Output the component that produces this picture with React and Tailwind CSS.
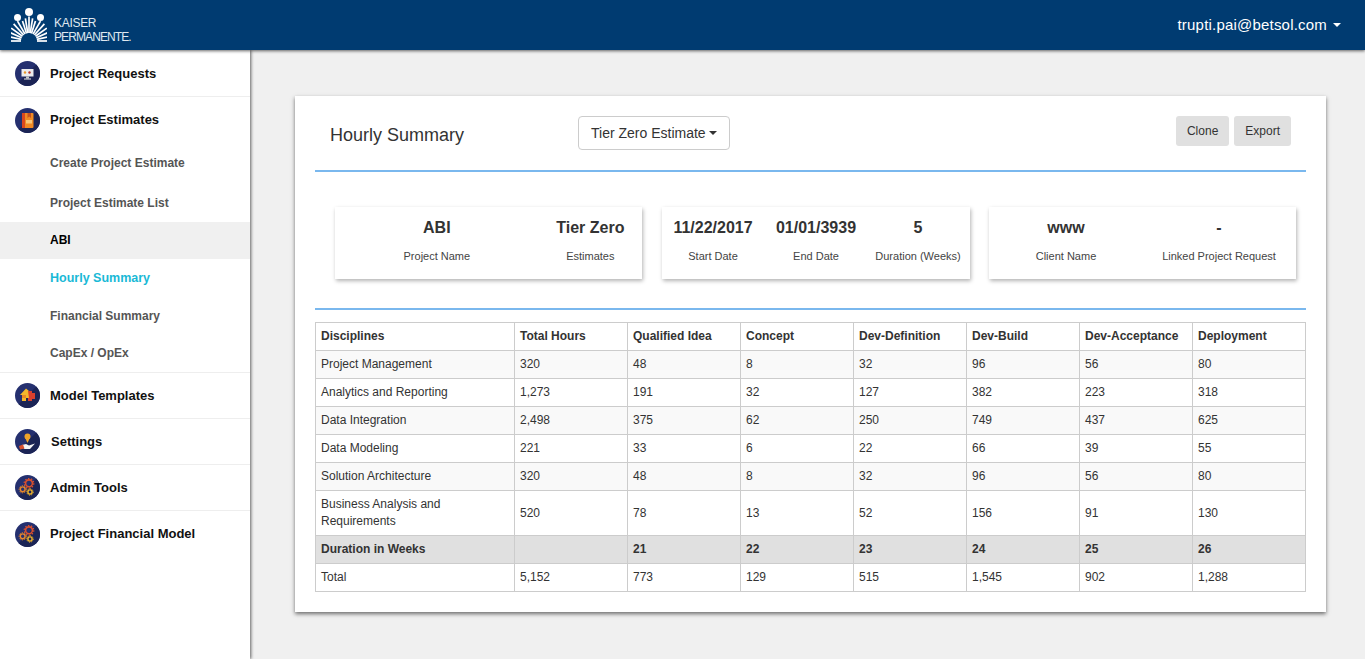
import React from "react";

const font = { fontFamily: '"Liberation Sans", Arial, sans-serif' };

const disciplines = [
  ["Project Management", "320", "48", "8", "32", "96", "56", "80"],
  ["Analytics and Reporting", "1,273", "191", "32", "127", "382", "223", "318"],
  ["Data Integration", "2,498", "375", "62", "250", "749", "437", "625"],
  ["Data Modeling", "221", "33", "6", "22", "66", "39", "55"],
  ["Solution Architecture", "320", "48", "8", "32", "96", "56", "80"],
  ["Business Analysis and Requirements", "520", "78", "13", "52", "156", "91", "130"],
];

const headers = ["Disciplines", "Total Hours", "Qualified Idea", "Concept", "Dev-Definition", "Dev-Build", "Dev-Acceptance", "Deployment"];
const weeks = ["Duration in Weeks", "", "21", "22", "23", "24", "25", "26"];
const total = ["Total", "5,152", "773", "129", "515", "1,545", "902", "1,288"];

// [angle, outer radius] of the rays in the logo
const rays = [
  [180, 18], [168, 19], [156, 20.5], [144, 22], [132, 23], [120, 23], [108, 21],
  [99, 23], [90, 24.5], [81, 23], [72, 21], [60, 23], [48, 23], [36, 22], [24, 20.5], [12, 19], [0, 18],
];

const Logo = () => (
  <svg width="36" height="34" viewBox="0 0 36 34">
    <circle cx="18" cy="4" r="4" fill="#fff" />
    <circle cx="6.5" cy="9.5" r="3.5" fill="#fff" />
    <circle cx="29.5" cy="9.5" r="3.5" fill="#fff" />
    <g stroke="#fff" strokeWidth="1.7">
      {rays.map(([a, r]) => {
        const c = Math.cos((a * Math.PI) / 180);
        const s = Math.sin((a * Math.PI) / 180);
        return <line key={a} x1={18 + 8 * c} y1={33 - 8 * s} x2={18 + r * c} y2={33 - r * s} />;
      })}
    </g>
  </svg>
);

const Badge = ({ children }) => (
  <svg width="25" height="25" viewBox="0 0 25 25" className="shrink-0">
    <circle cx="12.5" cy="12.5" r="12.5" fill="#25306f" />
    <path d="M21.3 3.6 A12.5 12.5 0 0 1 3.6 21.3 Z" fill="#1b2455" />
    {children}
  </svg>
);

const Gears = () => (
  <Badge>
    <circle cx="14" cy="8.3" r="3.4" fill="none" stroke="#d9502e" strokeWidth="1.6" />
    <circle cx="14" cy="8.3" r="4.8" fill="none" stroke="#d9502e" strokeWidth="1.2" strokeDasharray="1.5 1.5" />
    <circle cx="7.7" cy="14.3" r="2.4" fill="none" stroke="#e8872a" strokeWidth="1.4" />
    <circle cx="7.7" cy="14.3" r="3.6" fill="none" stroke="#e8872a" strokeWidth="1" strokeDasharray="1.3 1.3" />
    <circle cx="15" cy="17" r="2.1" fill="none" stroke="#f0b429" strokeWidth="1.4" />
    <circle cx="15" cy="17" r="3.2" fill="none" stroke="#f0b429" strokeWidth="1" strokeDasharray="1.2 1.2" />
  </Badge>
);

const SideRow = ({ icon, label, border = true, h = "h-[46px]", labelClass = "" }) => (
  <div className={`flex items-center gap-[10px] pl-[15px] ${h} ${border ? "border-b border-[#eeeeee]" : ""}`}>
    {icon}
    <span className={`text-[13px] font-bold text-[#111111] ${labelClass}`}>{label}</span>
  </div>
);

const SubRow = ({ label, h = "h-[38px]", className = "text-[12px] text-[#555555]" }) => (
  <div className={`flex items-center pl-[50px] font-bold ${h} ${className}`}>{label}</div>
);

const Stat = ({ value, label, className = "" }) => (
  <div className={`flex flex-col items-center ${className}`}>
    <div className="text-base leading-[22px] font-bold text-[#333333]">{value}</div>
    <div className="mt-[9px] text-[11px] leading-4 whitespace-nowrap text-[#444444]">{label}</div>
  </div>
);

const StatCard = ({ children, className = "" }) => (
  <div className={`flex h-[72px] items-start bg-white pt-[10px] shadow-[1px_2px_4px_rgba(0,0,0,0.3)] ${className}`}>
    {children}
  </div>
);

const cols = ["w-[199px]", "w-[113px]", "w-[113px]", "w-[113px]", "w-[113px]", "w-[113px]", "w-[113px]", "w-[113px]"];

const App = () => {
  return (
    <div className="flex h-[659px] w-full flex-col overflow-hidden bg-[#f0f0f0]" style={font}>
      <header className="relative z-20 flex h-[50px] shrink-0 items-center justify-between bg-[#003b71] pr-[24px] pl-[11px] shadow-[0_1px_3px_rgba(0,0,0,0.6)]">
        <div className="flex items-center gap-[7px]">
          <Logo />
          <div className="mt-[9px] text-[12px] leading-[14px] text-[#dfe8f0]">
            <div className="tracking-[-0.3px]">KAISER</div>
            <div className="tracking-[-0.9px]">PERMANENTE.</div>
          </div>
        </div>
        <div className="flex items-center gap-[6px] text-[15px] tracking-[0.2px] text-white">
          trupti.pai@betsol.com
          <span className="h-0 w-0 border-x-4 border-t-4 border-x-transparent border-t-white" />
        </div>
      </header>

      <div className="flex min-h-0 flex-1">
        <aside className="relative z-10 w-[250px] shrink-0 bg-white shadow-[1px_0_3px_rgba(0,0,0,0.6)]">
          <SideRow
            label="Project Requests"
            h="h-[47px] pt-[1px]"
            icon={
              <Badge>
                <rect x="6.5" y="8" width="12" height="7.5" fill="#ececec" />
                <circle cx="10" cy="11.5" r="1.2" fill="#e8972a" />
                <circle cx="14.5" cy="11.5" r="1.2" fill="#b8322a" />
                <rect x="11" y="15.5" width="3" height="2" fill="#c4c4c4" />
                <rect x="9" y="17.5" width="7" height="1" fill="#ececec" />
              </Badge>
            }
          />
          <SideRow
            label="Project Estimates"
            border={false}
            icon={
              <Badge>
                <rect x="7" y="5" width="11.5" height="15" rx="1" fill="#f08a24" />
                <rect x="7" y="5" width="3" height="15" fill="#d9481f" />
                <path d="M12.5 5 H16 V10 L14.2 8.6 L12.5 10 Z" fill="#c7521f" />
                <rect x="11" y="12" width="6" height="3.5" fill="#f7c779" />
              </Badge>
            }
          />
          <div className="border-b border-[#eeeeee]">
            <SubRow label="Create Project Estimate" h="h-[39px]" />
            <SubRow label="Project Estimate List" h="h-[40px] pt-[1px]" />
            <SubRow label="ABI" h="h-[37px] pb-[2px]" className="bg-[#f0f0f0] text-[12px] text-black" />
            <SubRow label="Hourly Summary" className="text-[12.5px] text-[#1ab9d6]" />
            <SubRow label="Financial Summary" />
            <SubRow label="CapEx / OpEx" h="h-[37px] pb-[2px]" />
          </div>
          <SideRow
            label="Model Templates"
            icon={
              <Badge>
                <path d="M5 12 L11 5.5 L14 8 L14 15 L11 15 L11 18 L7 18 L7 12 Z" fill="#f4b82c" />
                <path d="M13 8 H17 V10 H20 V16 H17 V18 H13 V15 H14 Z" fill="#d9402e" />
                <path d="M7 12 H11 V15 H7 Z" fill="#ea8a25" />
              </Badge>
            }
          />
          <SideRow
            label="Settings"
            labelClass="ml-[1px]"
            icon={
              <Badge>
                <circle cx="12.5" cy="7.5" r="3" fill="#f0a429" />
                <path d="M10 8.5 L12.5 14 L15 8.5 Z" fill="#f0a429" />
                <path d="M7 16 L11 15 L14 16.5 L20 14.5 L15 20 L9 20 Z" fill="#f4f4f4" />
                <path d="M4 17 L8 15.5 L9.5 19.5 L5 20.5 Z" fill="#d9502e" />
              </Badge>
            }
          />
          <SideRow label="Admin Tools" icon={<Gears />} />
          <SideRow label="Project Financial Model" border={false} icon={<Gears />} />
        </aside>

        <main className="min-w-0 flex-1 pt-[46px] pl-[45px]">
          <section className="w-[1031px] bg-white px-5 pb-[20px] shadow-[0_2px_4px_rgba(0,0,0,0.55)]">
            <div className="flex h-[76px] items-start border-b-2 border-[#7ab8ee]">
              <h1 className="mt-[27px] ml-[15px] w-[248px] text-lg leading-6 text-[#333333]">Hourly Summary</h1>
              <button className="mt-[20px] flex h-[34px] items-center gap-[3px] rounded border border-[#cccccc] bg-white px-3 text-sm text-[#333333]">
                Tier Zero Estimate
                <span className="h-0 w-0 border-x-4 border-t-4 border-x-transparent border-t-[#333333]" />
              </button>
              <div className="mt-[20px] mr-[15px] ml-auto flex gap-[5px]">
                <button className="h-[30px] rounded-[3px] bg-[#e0e0e0] px-[11px] text-xs text-[#333333]">Clone</button>
                <button className="h-[30px] rounded-[3px] bg-[#e0e0e0] px-[11px] text-xs text-[#333333]">Export</button>
              </div>
            </div>

            <div className="flex h-[138px] items-start gap-[19px] border-b-2 border-[#7ab8ee] pt-[35px] pl-[20px]">
              <StatCard className="mr-[1px] w-[307px]">
                <Stat value="ABI" label="Project Name" className="w-[205px]" />
                <Stat value="Tier Zero" label="Estimates" className="w-[104px]" />
              </StatCard>
              <StatCard className="w-[308px] pl-[11px]">
                <Stat value="11/22/2017" label="Start Date" className="w-[80px]" />
                <Stat value="01/01/3939" label="End Date" className="ml-[23px] w-[80px]" />
                <Stat value="5" label="Duration (Weeks)" className="ml-[19px] w-[86px]" />
              </StatCard>
              <StatCard className="w-[307px]">
                <Stat value="www" label="Client Name" className="w-[154px]" />
                <Stat value="-" label="Linked Project Request" className="w-[152px]" />
              </StatCard>
            </div>

            <table className="mt-[12px] w-[990px] table-fixed border-collapse text-xs text-[#333333]">
              <colgroup>
                {cols.map((c, i) => (
                  <col key={i} className={c} />
                ))}
              </colgroup>
              <thead>
                <tr className="h-[28px]">
                  {headers.map((h) => (
                    <th key={h} className="border border-[#cccccc] px-[5px] pb-[2px] text-left font-bold">
                      {h}
                    </th>
                  ))}
                </tr>
              </thead>
              <tbody>
                {disciplines.map((row, i) => (
                  <tr key={row[0]} className={`${i === 5 ? "h-[45px]" : "h-[28px]"} ${i % 2 === 0 ? "bg-[#f9f9f9]" : "bg-white"}`}>
                    {row.map((c, j) => (
                      <td key={j} className="border border-[#cccccc] px-[5px] leading-[17px]">
                        {c}
                      </td>
                    ))}
                  </tr>
                ))}
                <tr className="h-[28px] bg-[#e0e0e0] font-bold">
                  {weeks.map((c, j) => (
                    <td key={j} className="border border-[#cccccc] px-[5px] pb-[2px]">
                      {c}
                    </td>
                  ))}
                </tr>
                <tr className="h-[28px]">
                  {total.map((c, j) => (
                    <td key={j} className="border border-[#cccccc] px-[5px] pb-[2px]">
                      {c}
                    </td>
                  ))}
                </tr>
              </tbody>
            </table>
          </section>
        </main>
      </div>
    </div>
  );
};

export default App;
